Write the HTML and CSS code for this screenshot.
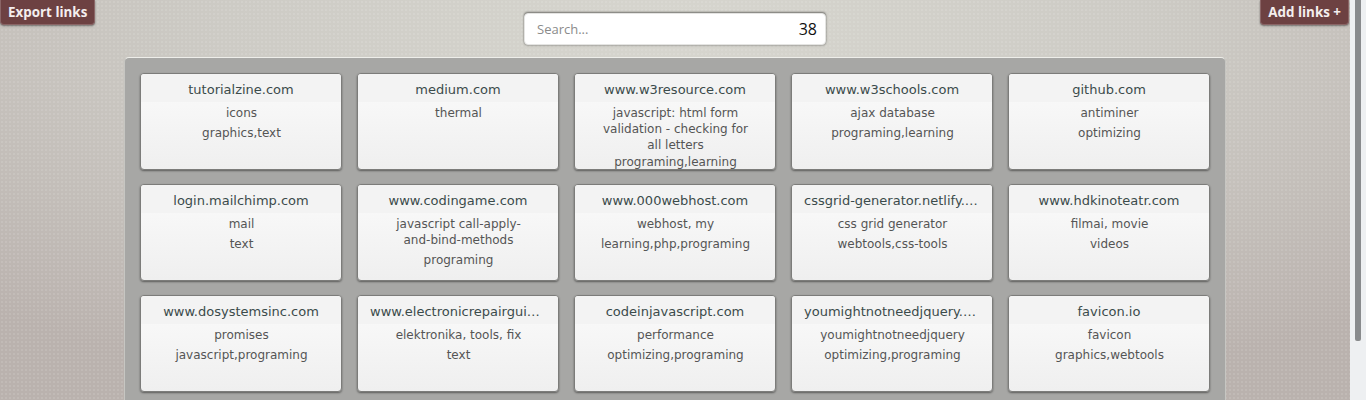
FILE: index.html
```html
<!DOCTYPE html>
<html>
<head>
<meta charset="utf-8">
<link rel="stylesheet" href="styles.css">
</head>
<body>
<header class="top">
  <div class="top-left"><button class="btn">Export links</button></div>
  <div class="search">
    <input class="search-input" type="text" placeholder="Search...">
    <span class="search-count">38</span>
  </div>
  <div class="top-right"><button class="btn">Add links +</button></div>
</header>
<main class="panel">
  <div class="grid">
    <div class="card"><div class="card-title">tutorialzine.com</div><div class="card-body"><div class="desc">icons</div><div class="tags">graphics,text</div></div></div>
    <div class="card"><div class="card-title">medium.com</div><div class="card-body"><div class="desc">thermal</div><div class="tags"></div></div></div>
    <div class="card"><div class="card-title">www.w3resource.com</div><div class="card-body"><div class="desc">javascript: html form validation - checking for all letters</div><div class="tags">programing,learning</div></div></div>
    <div class="card"><div class="card-title">www.w3schools.com</div><div class="card-body"><div class="desc">ajax database</div><div class="tags">programing,learning</div></div></div>
    <div class="card"><div class="card-title">github.com</div><div class="card-body"><div class="desc">antiminer</div><div class="tags">optimizing</div></div></div>

    <div class="card"><div class="card-title">login.mailchimp.com</div><div class="card-body"><div class="desc">mail</div><div class="tags">text</div></div></div>
    <div class="card"><div class="card-title">www.codingame.com</div><div class="card-body"><div class="desc">javascript call-apply-<span class="nw">and-bind-methods</span></div><div class="tags">programing</div></div></div>
    <div class="card"><div class="card-title">www.000webhost.com</div><div class="card-body"><div class="desc">webhost, my</div><div class="tags">learning,php,programing</div></div></div>
    <div class="card"><div class="card-title">cssgrid-generator.netlify.com</div><div class="card-body"><div class="desc">css grid generator</div><div class="tags">webtools,css-tools</div></div></div>
    <div class="card"><div class="card-title">www.hdkinoteatr.com</div><div class="card-body"><div class="desc">filmai, movie</div><div class="tags">videos</div></div></div>

    <div class="card"><div class="card-title">www.dosystemsinc.com</div><div class="card-body"><div class="desc">promises</div><div class="tags">javascript,programing</div></div></div>
    <div class="card"><div class="card-title">www.electronicrepairguide.com</div><div class="card-body"><div class="desc">elektronika, tools, fix</div><div class="tags">text</div></div></div>
    <div class="card"><div class="card-title">codeinjavascript.com</div><div class="card-body"><div class="desc">performance</div><div class="tags">optimizing,programing</div></div></div>
    <div class="card"><div class="card-title">youmightnotneedjquery.com</div><div class="card-body"><div class="desc">youmightnotneedjquery</div><div class="tags">optimizing,programing</div></div></div>
    <div class="card"><div class="card-title">favicon.io</div><div class="card-body"><div class="desc">favicon</div><div class="tags">graphics,webtools</div></div></div>
  </div>
</main>
<div class="scrollbar"><div class="scrollbar-thumb"></div></div>
</body>
</html>
```

FILE: styles.css
```css
html {
  background: #c4c2bd;
}
::-webkit-scrollbar {
  width: 0;
  height: 0;
}
body {
  margin: 0 16px 0 0;
  min-height: 469px;
  font-family: "DejaVu Sans", sans-serif;
  background:
    radial-gradient(circle, rgba(255,255,255,0.10) 1px, transparent 1px) 0 0 / 4px 4px,
    radial-gradient(ellipse 75% 95% at 50% 8%, #d7d6cf 0%, #cdcbc5 45%, #bab2ae 100%);
  background-attachment: fixed;
}
.scrollbar {
  position: fixed;
  top: 0;
  right: 0;
  width: 16px;
  height: 100vh;
  background: #eef0f2;
}
.scrollbar-thumb {
  margin-left: 5px;
  width: 6px;
  height: 341px;
  background: #898b8d;
  border-radius: 0 0 2px 2px;
}
.top {
  display: grid;
  grid-template-columns: 1fr 302px 1fr;
  align-items: start;
}
.top-right {
  display: flex;
  justify-content: flex-end;
  padding-right: 1px;
}
.btn {
  font-family: "Open Sans", sans-serif;
  font-weight: 700;
  font-size: 13.4px;
  color: #f4eeee;
  background: #6d4142;
  border: 1px solid #8a6566;
  border-top: none;
  border-radius: 0 0 4px 4px;
  height: 25px;
  padding: 0 7px;
  line-height: 24px;
  box-shadow: 0 1px 2px rgba(0,0,0,0.45);
}
.search {
  position: relative;
  margin-top: 13px;
}
.search-input {
  display: block;
  box-sizing: border-box;
  width: 302px;
  height: 32px;
  border: 1px solid #e4e4e2;
  border-radius: 4px;
  background: #fff;
  padding: 0 12px;
  font-family: "Open Sans", sans-serif;
  font-size: 13px;
  color: #333;
  box-shadow: 0 -1px 2px rgba(0,0,0,0.45), 0 1px 2px rgba(0,0,0,0.2);
  outline: none;
}
.search-input::placeholder {
  color: #8b8b8b;
}
.search-count {
  position: absolute;
  right: 9px;
  top: 5px;
  font-family: "Open Sans", sans-serif;
  font-size: 16px;
  color: #111;
}
.panel {
  box-sizing: border-box;
  width: 1102px;
  margin: 12px auto 61px;
  padding: 16px;
  background: #a7a7a5;
  border-radius: 5px;
  border-top: 1px solid #eeeeea;
  border-left: 1px solid #c6c6c2;
  border-right: 1px solid #c6c6c2;
}
.grid {
  display: grid;
  grid-template-columns: repeat(5, 202px);
  column-gap: 15px;
  row-gap: 14px;
  margin-top: -1px;
  margin-left: -1px;
}
.card {
  box-sizing: border-box;
  height: 97px;
  border: 1px solid #7c7c7a;
  border-radius: 4px;
  background: linear-gradient(#fbfbfb, #efefef);
  box-shadow: 0 1px 2px rgba(0,0,0,0.45);
  overflow: hidden;
  text-align: center;
}
.card-title {
  height: 28px;
  line-height: 31px;
  padding: 0 12px;
  background: #f3f3f3;
  color: #3b4b4b;
  font-size: 13px;
  white-space: nowrap;
  overflow: hidden;
  text-overflow: ellipsis;
}
.card-body {
  padding: 3px 24px 0 25px;
  color: #555;
  font-size: 12px;
}
.desc {
  line-height: 16px;
  max-height: 45px;
}
.nw {
  white-space: nowrap;
}
.tags {
  line-height: 16px;
  margin-top: 4px;
}
```
